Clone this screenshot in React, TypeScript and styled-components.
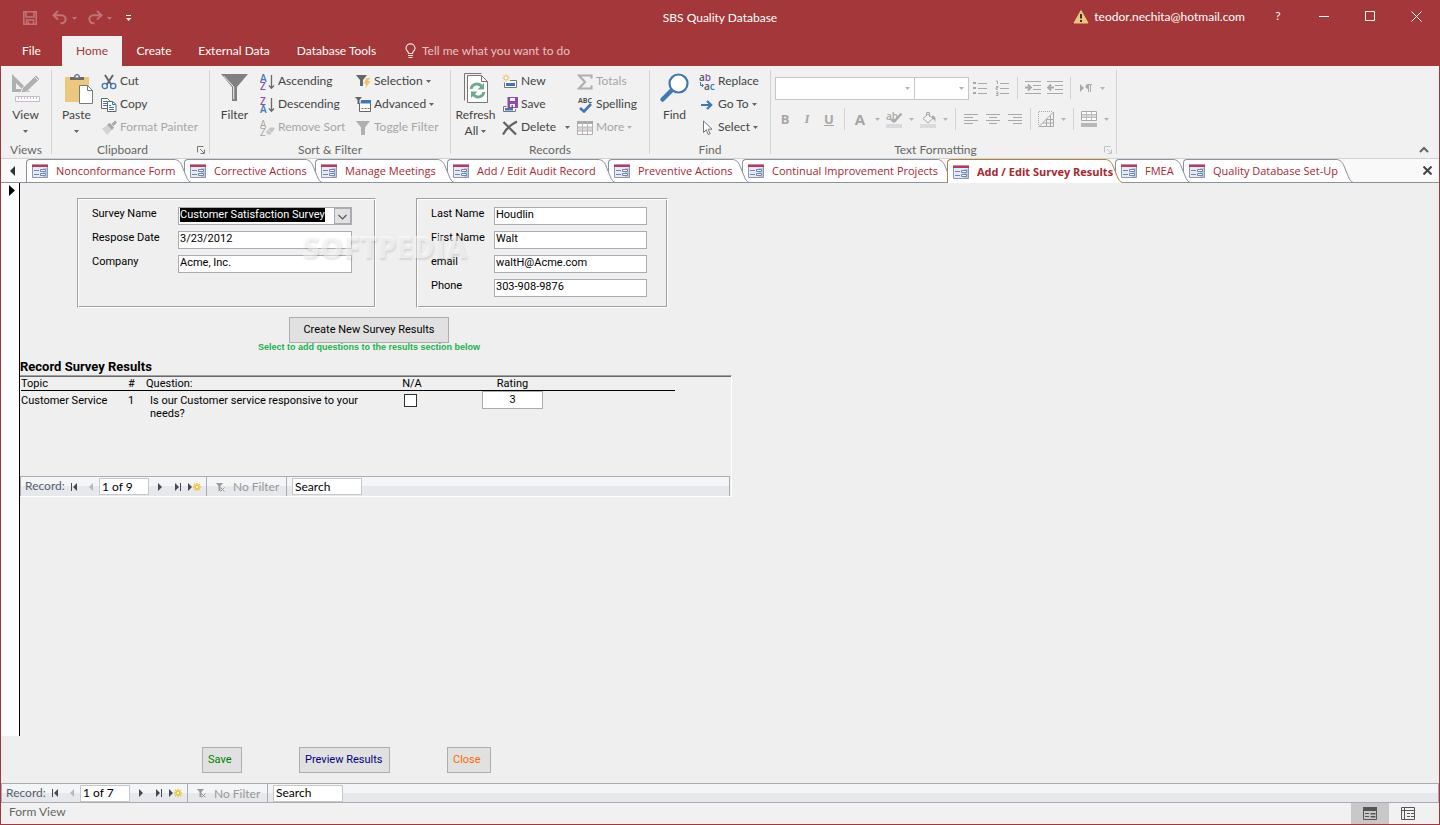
import React from "react";
import styled, { createGlobalStyle, css } from "styled-components";

const RED = "#a4373a";
const UI = `Lato, "Open Sans", sans-serif`;
const TAB = `"Open Sans", "Noto Sans", sans-serif`;
const FORM = `Roboto, "Liberation Sans", sans-serif`;

const GlobalStyle = createGlobalStyle`
  *, *::before, *::after { box-sizing: border-box; }
  body { margin: 0; background: #efefef; }
  button, input, select { font: inherit; color: inherit; margin: 0; padding: 0; border: 0; background: none; border-radius: 0; }
  button { display: inline-flex; align-items: center; text-align: left; white-space: nowrap; }
  svg { display: block; flex: none; }
`;

const Window = styled.div`
  min-height: 100vh;
  display: flex;
  flex-direction: column;
  border: 1px solid ${RED};
  border-top: 0;
  font: 12px/16px ${UI};
  color: #444;
`;

/* ---------- Title bar ---------- */

const TitleBar = styled.header`
  display: grid;
  grid-template-columns: 1fr auto 1fr;
  height: 36px;
  background: ${RED};
  color: #fff;
`;
const QuickAccess = styled.div`
  display: flex;
  align-items: flex-start;
  gap: 7px;
  padding: 10px 0 0 17px;
`;
const QuickSplit = styled.div`
  display: flex;
`;
const QuickButton = styled.button<{ $w: number; $dim?: boolean }>`
  width: ${(p) => p.$w}px;
  height: 16px;
  justify-content: center;
  opacity: ${(p) => (p.$dim ? 0.3 : 1)};
`;
const Title = styled.h1`
  margin: 0;
  padding-top: 10px;
  font: 12px/16px ${UI};
`;
const TitleRight = styled.div`
  display: flex;
  justify-content: flex-end;
  height: 32px;
`;
const Account = styled.a`
  display: flex;
  align-items: center;
  gap: 5px;
  padding: 2px 10px 0 0;
  color: #fff;
  text-decoration: none;
`;
const WindowButton = styled.button`
  width: 46px;
  height: 32px;
  justify-content: center;
`;

/* ---------- Ribbon tabs ---------- */

const Menu = styled.nav`
  display: flex;
  height: 30px;
  background: ${RED};
  color: #fff;
`;
const MenuTab = styled.button<{ $w: number; $active?: boolean }>`
  width: ${(p) => p.$w}px;
  justify-content: center;
  ${(p) => p.$active && css`background: #f1f1f1; color: ${RED};`}
`;
const TellMe = styled.label`
  display: flex;
  align-items: center;
  gap: 6px;
  padding-left: 14px;
  input { width: 200px; }
  input::placeholder { color: #e4c3c4; opacity: 1; }
`;

/* ---------- Ribbon ---------- */

const Ribbon = styled.section`
  display: flex;
  height: 93px;
  background: #f1f1f1;
  border-bottom: 1px solid #d2d2d2;
`;
const Group = styled.div<{ $w: number }>`
  display: flex;
  flex-direction: column;
  width: ${(p) => p.$w}px;
  flex: none;
`;
const GroupBody = styled.div`
  display: flex;
  height: 73px;
  padding-top: 4px;
`;
const GroupFooter = styled.div`
  display: flex;
  margin-top: 3px;
  color: #666;
`;
const GroupLabel = styled.span`
  flex: 1;
  text-align: center;
`;
const Launcher = styled.button<{ $dim?: boolean }>`
  width: 16px;
  justify-content: center;
  color: ${(p) => (p.$dim ? "#c0c0c0" : "#777")};
`;
const GroupLine = styled.div`
  width: 1px;
  margin: 4px 0;
  background: #d2d2d2;
`;
const BigButton = styled.button`
  flex-direction: column;
  width: 49px;
  padding-top: 2px;
  flex: none;
`;
const BigLabel = styled.span<{ $first?: boolean }>`
  display: flex;
  align-items: center;
  justify-content: center;
  gap: 3px;
  height: 16px;
  margin-top: ${(p) => (p.$first ? 3 : 0)}px;
`;
const Column = styled.div<{ $w: number; $pad?: number }>`
  display: flex;
  flex-direction: column;
  width: ${(p) => p.$w}px;
  margin-left: ${(p) => p.$pad || 0}px;
  flex: none;
`;
const SmallButton = styled.button<{ $off?: boolean }>`
  height: 23px;
  gap: 3px;
  color: ${(p) => (p.$off ? "#a6a6a6" : "#444")};
  span { padding-bottom: 2px; }
`;
const SplitRow = styled.div`
  display: flex;
`;
const CaretButton = styled.button`
  width: 14px;
  height: 23px;
  margin-left: 4px;
  justify-content: center;
`;
const FormatArea = styled.div`
  display: flex;
  flex-direction: column;
  gap: 9px;
  padding-top: 7px;
`;
const FormatRow = styled.div<{ $pad: number }>`
  display: flex;
  height: 22px;
  padding-left: ${(p) => p.$pad}px;
  color: #a6a6a6;
`;
const FormatButton = styled.button<{ $w?: number }>`
  width: ${(p) => p.$w || 22}px;
  justify-content: center;
`;
const FormatLine = styled.div`
  width: 1px;
  margin: 0 4px;
  background: #d2d2d2;
`;
const FontBox = styled.div<{ $w: number }>`
  display: flex;
  align-items: center;
  justify-content: flex-end;
  width: ${(p) => p.$w}px;
  height: 23px;
  padding-right: 4px;
  border: 1px solid #c6c6c6;
  background: #fff;
  & + & { margin-left: -1px; }
  select { flex: 1; min-width: 0; appearance: none; height: 100%; }
`;
const Collapse = styled.button`
  margin: auto 10px 5px auto;
`;

/* ---------- Document tabs ---------- */

const TabStrip = styled.nav`
  display: flex;
  height: 24px;
  background: #f9f9f9;
  border-bottom: 1px solid #8a929c;
`;
const ScrollTabs = styled.button`
  width: 25px;
  padding-left: 9px;
  flex: none;
`;
const DocTab = styled.button<{ $w: number; $z: number; $active?: boolean }>`
  position: relative;
  z-index: ${(p) => p.$z};
  flex: none;
  align-items: stretch;
  width: ${(p) => p.$w}px;
  height: ${(p) => (p.$active ? 24 : 23)}px;
  margin-right: -8px;
  color: #a9272f;
  font: ${(p) => (p.$active ? 700 : 400)} 11px/16px ${TAB};
`;
const DocTabBody = styled.span<{ $active?: boolean }>`
  display: flex;
  align-items: center;
  gap: 8px;
  flex: 1;
  min-width: 0;
  padding-left: 5px;
  background: #fff;
  border: solid ${(p) => (p.$active ? "#a8843f" : "#8a929c")};
  border-width: 1px 0 0 1px;
  border-top-left-radius: 4px;
  span { position: relative; z-index: 1; }
`;
const CloseDoc = styled.button`
  margin-left: auto;
  width: 24px;
  justify-content: center;
`;

/* ---------- Form ---------- */

const FormMain = styled.main`
  flex: 1;
  display: flex;
  background: #efefef;
  font: 11px/14px ${FORM};
  color: #000;
`;
const Selector = styled.div`
  width: 19px;
  flex: none;
  padding: 2px 0 0 8px;
  background: #fff;
  border-right: 1px solid #000;
`;
const Detail = styled.div`
  position: relative;
  flex: 1;
  min-width: 0;
`;
const Frames = styled.div`
  display: flex;
  align-items: flex-start;
  gap: 40px;
  padding: 15px 0 0 57px;
`;
const Frame = styled.fieldset<{ $w: number }>`
  display: flex;
  flex-direction: column;
  gap: 6px;
  width: ${(p) => p.$w}px;
  height: 110px;
  margin: 0;
  padding: 8px 0 0 14px;
  border: 1px solid;
  border-color: #a0a0a0 #fff #fff #a0a0a0;
  box-shadow: inset 1px 1px 0 #fff, inset -1px -1px 0 #a0a0a0;
`;
const Field = styled.label<{ $label: number; $input: number }>`
  display: grid;
  grid-template-columns: ${(p) => p.$label}px ${(p) => p.$input}px;
  height: 18px;
  input { border: 1px solid #ababb3; background: #fff; padding: 0 1px 2px; }
`;
const Combo = styled.span`
  display: flex;
  border: 1px solid #ababb3;
  background: #fff;
  position: relative;
  select {
    flex: 1;
    min-width: 0;
    appearance: none;
    padding: 0 18px 2px 1px;
    color: #fff;
    background: linear-gradient(#000, #000) 1px 0 / 145px 14px no-repeat #fff;
  }
  svg {
    position: absolute;
    right: 0;
    top: 0;
    pointer-events: none;
  }
`;
const Watermark = styled.div`
  position: absolute;
  left: 282px;
  top: 46px;
  font: 800 30px/36px "Open Sans", sans-serif;
  color: rgba(255, 255, 255, 0.5);
  text-shadow: 1px 2px 2px rgba(0, 0, 0, 0.1);
  pointer-events: none;
`;
const FormButton = styled.button<{ $w: number; $color?: string; $center?: boolean }>`
  width: ${(p) => p.$w}px;
  height: 26px;
  padding: 0 5px;
  justify-content: ${(p) => (p.$center ? "center" : "flex-start")};
  border: 1px solid #adadad;
  background: #e1e1e1;
  color: ${(p) => p.$color || "#000"};
`;
const Create = styled.div`
  display: flex;
  flex-direction: column;
  align-items: center;
  width: 216px;
  margin: 9px 0 0 241px;
`;
const Hint = styled.span`
  font: 700 9px/9px "Liberation Sans", sans-serif;
  color: #22b14c;
  white-space: nowrap;
`;
const SectionTitle = styled.h2`
  margin: 7px 0 0;
  font: 700 13px/16px ${FORM};
`;
const SubForm = styled.section`
  display: flex;
  flex-direction: column;
  justify-content: space-between;
  width: 712px;
  height: 122px;
  border: solid #fff;
  border-width: 1px 1px 1px 0;
  border-top-color: #a0a0a0;
  box-shadow: inset 0 1px 0 #696969;
  padding: 1px 1px 0 0;
`;
const Results = styled.table`
  width: 654px;
  margin-left: 1px;
  table-layout: fixed;
  border-collapse: collapse;
  th { height: 13px; padding: 0; font-weight: 400; line-height: 13px; text-align: left; border-bottom: 1px solid #000; }
  td { padding: 0; vertical-align: top; }
  td > span { display: block; padding: 3px 0 0; line-height: 13px; }
  td:nth-child(3) > span { padding-left: 4px; }
`;
const CenterHead = styled.th`
  && { text-align: center; }
`;
const Centered = styled.td`
  text-align: center;
  input[type="checkbox"] {
    appearance: none;
    display: block;
    width: 13px;
    height: 13px;
    margin: 3px 0 0 14px;
    border: 1px solid #333;
    background: #fff;
  }
  input[type="text"] {
    display: block;
    width: 61px;
    height: 18px;
    margin: 0 auto;
    padding-bottom: 2px;
    text-align: center;
    border: 1px solid #ababb3;
    background: #fff;
  }
`;
const FormFooter = styled.footer`
  display: flex;
  align-items: flex-start;
  gap: 57px;
  height: 47px;
  padding: 11px 0 0 201px;
  background: #efefef;
  font: 11px/14px ${FORM};
`;

/* ---------- Record navigator and status bar ---------- */

const NavBar = styled.div<{ $foot?: boolean }>`
  display: flex;
  align-items: stretch;
  height: 20px;
  padding-left: 4px;
  border: solid #ababb3;
  border-width: ${(p) => (p.$foot ? "1px" : "1px 1px 0")};
  background: linear-gradient(#f4f5f7 50%, #e6e8eb 50%);
  font: 12px/16px ${UI};
  color: #555d6b;
  input {
    align-self: center;
    height: 17px;
    padding: 0 2px 1px;
    border: 1px solid #c6c8cc;
    background: #fff;
    color: #000;
  }
`;
const NavLabel = styled.label`
  width: 42px;
  line-height: 18px;
`;
const PageInput = styled.input`
  width: 50px;
`;
const SearchInput = styled.input`
  width: 70px;
  margin-left: 5px;
`;
const NavButton = styled.button<{ $w: number }>`
  width: ${(p) => p.$w}px;
  justify-content: center;
`;
const NavLine = styled.div`
  width: 1px;
  margin-left: 1px;
  background: #ababb3;
`;
const NoFilter = styled.button`
  width: 78px;
  gap: 8px;
  padding: 1px 0 0 9px;
  color: #999;
`;
const StatusBar = styled.footer`
  display: flex;
  height: 21px;
  padding-left: 8px;
  background: #f1f1f1;
  color: #666;
  line-height: 18px;
`;
const ViewButton = styled.button<{ $on?: boolean }>`
  width: 38px;
  justify-content: center;
  background: ${(p) => (p.$on ? "#c8c8c8" : "transparent")};
  &:last-child { margin-right: 12px; }
`;
const Spacer = styled.span`
  flex: 1;
`;

/* ---------- Icons ---------- */

const Svg = ({ w = 16, h = 16, children }: { w?: number; h?: number; children: React.ReactNode }) => (
  <svg width={w} height={h} viewBox={`0 0 ${w} ${h}`} fill="none" aria-hidden="true">{children}</svg>
);
const Caret = ({ c = "#666" }: { c?: string }) => (
  <Svg w={5} h={3}><path d="M0 0h5L2.5 3z" fill={c} /></Svg>
);
const GREY = "#a9a9a9";

const SaveQuick = () => (
  <Svg><path d="M1.8 1.8h12.4v12.4H1.8zM4 2v5h8V2M4.5 14v-4h7v4M6.5 11.5V14" stroke="#fff" strokeWidth="1.6" /></Svg>
);
const UndoIcon = () => (
  <Svg><path d="M6 1 1.5 5.3 6 9.6M2 5.3h7.5c5.5 0 5.5 8 0 8H8.5" stroke="#fff" strokeWidth="2" /></Svg>
);
const RedoIcon = () => (
  <Svg><path d="m10 1 4.5 4.3L10 9.6M14 5.3H6.5c-5.5 0-5.5 8 0 8h1" stroke="#fff" strokeWidth="2" /></Svg>
);
const CustomizeIcon = () => (
  <Svg w={7} h={8}><path d="M1 1.5h5" stroke="#fff" /><path d="M1 4h5.5L3.5 7z" fill="#fff" /></Svg>
);
const WarningIcon = () => (
  <Svg><path d="M8 1.5 15 14H1z" fill="#edc67b" stroke="#edc67b" strokeLinejoin="round" /><path d="M8 5v4.5M8 11v2" stroke="#333" strokeWidth="2" /></Svg>
);
const BulbIcon = () => (
  <Svg w={11} h={16}><path d="M3.5 10.5C3.5 8 1 8 1 5.3a4.5 4.5 0 0 1 9 0C10 8 7.5 8 7.5 10.5zM3 12.5h5M3.5 14.5h4" stroke="#f3dfe0" strokeWidth="1.2" /></Svg>
);
const ViewIcon = () => (
  <Svg w={32} h={32}>
    <path d="M2 2v18h18zm4 9 6 6H6z" fill="#b0b0b0" fillRule="evenodd" />
    <path d="m11 21 1.5-5L26 3l4 4-13.5 13z" fill="#b0b0b0" stroke="#f1f1f1" />
    <path d="m24 4 4.5 4.5" stroke="#f1f1f1" />
    <path d="M5.5 24.5h24v5h-24z" fill="#fbf8fc" stroke="#c4bcc6" />
    <path d="M8.5 25v2M11.5 25v2M14.5 25v2M17.5 25v2M20.5 25v2M23.5 25v2M26.5 25v2" stroke="#c4bcc6" />
  </Svg>
);
const PasteIcon = () => (
  <Svg w={32} h={32}>
    <path d="M4 5h24v25H4z" fill="#edc77e" />
    <path d="M9 8V5h4c0-4 6-4 6 0h4v3z" fill="#6b6b6b" /><path d="M14.5 4.5h3" stroke="#f1f1f1" strokeWidth="2" />
    <path d="M18.5 13.5h8l5 5v13h-13z" fill="#fff" stroke="#7a7a7a" /><path d="M26.5 13.5v5h5" stroke="#7a7a7a" />
  </Svg>
);
const CutIcon = () => (
  <Svg>
    <path d="m4 1 6.5 10M12 1 5.5 11" stroke="#666" strokeWidth="2" />
    <circle cx="3.8" cy="12" r="2.6" stroke="#3e79b6" strokeWidth="1.4" /><circle cx="12.2" cy="12" r="2.6" stroke="#3e79b6" strokeWidth="1.4" />
  </Svg>
);
const CopyIcon = () => (
  <Svg>
    <path d="M.5 1.5h6l2 2v8h-8z" fill="#fff" stroke="#666" /><path d="M2 4.5h4M2 6.5h4M2 8.5h4" stroke="#3e79b6" />
    <path d="M6.5 4.5h5l3.5 3v7H6.5z" fill="#fff" stroke="#666" /><path d="M11.5 4.5v3h3M8 8.5h2M8 10.5h5M8 12.5h5" stroke="#3e79b6" />
  </Svg>
);
const PainterIcon = () => (
  <Svg>
    <path d="M1 8.5 7 5l4 4.5L6 15z" fill="#d6d0d7" />
    <path d="m6 4.5 3-1.5 4 4.5-2 2.5zM10.5 4 14 .5l2 2L12.5 6z" fill="#a9a9a9" />
  </Svg>
);
const LauncherIcon = () => (
  <Svg w={8} h={8}><path d="M.5 6.5v-6h6M3 3l4 4M7.5 3.5v4h-4" stroke="currentColor" /></Svg>
);
const FilterIcon = () => (
  <Svg w={32} h={32}>
    <path d="M2 2h27L18 15v14h-5V15z" fill="#808080" /><path d="m4.5 3.8 10.2 11v12.5" stroke="#f1f1f1" />
  </Svg>
);
const SortIcon = ({ desc }: { desc?: boolean }) => (
  <Svg>
    <text x="1" y="7.5" fontFamily="Open Sans" fontWeight="600" fontSize="10" fill={desc ? "#8a4fa8" : "#3e79b6"}>{desc ? "Z" : "A"}</text>
    <text x="1" y="15.5" fontFamily="Open Sans" fontWeight="600" fontSize="10" fill={desc ? "#3e79b6" : "#8a4fa8"}>{desc ? "A" : "Z"}</text>
    <path d="M12.5 1v13M10 11.5l2.5 2.7 2.5-2.7" stroke="#6a6a6a" strokeWidth="1.3" />
  </Svg>
);
const RemoveSortIcon = () => (
  <Svg>
    <text x="1" y="7.5" fontFamily="Open Sans" fontSize="10" fill="#a6a6a6">A</text>
    <text x="1" y="15.5" fontFamily="Open Sans" fontSize="10" fill="#a6a6a6">Z</text>
    <path d="m7 12 4-4.5h4l1 1-4.5 6H8.500z" fill="#c9c3ca" /><path d="m9 9.5 3.5 3.5" stroke="#f1f1f1" />
  </Svg>
);
const SelectionIcon = () => (
  <Svg><path d="M1 1h11L8 6v6H5V6z" fill="#666" /><path d="m11 4 4.5-.5-2 3.5H16l-6.500 8.500 1.500-5.500H8.500z" fill="#edc067" stroke="#f1f1f1" strokeWidth=".5" /></Svg>
);
const AdvancedIcon = () => (
  <Svg>
    <path d="M0 0h7L4.500 3v4h-2V3z" fill="#666" />
    <path d="M4.500 6v8.500h11v-10H7" fill="#fff" stroke="#666" /><path d="M6 3h10v3.500H5.500z" fill="#3e79b6" />
    <path d="M6.500 11.500h2M9.500 11.500h2M12.500 11.500h2" stroke="#666" />
  </Svg>
);
const ToggleIcon = () => <Svg><path d="M1 1h14l-5 6.500V15H6V7.500z" fill="#b0b0b0" /></Svg>;
const RefreshIcon = () => (
  <Svg w={32} h={32}>
    <path d="M21.500 1.500h-17v27" stroke="#777" />
    <path d="M7.500 3.500h14l6 6v21h-20z" fill="#fff" stroke="#777" /><path d="M21.500 3.500v6h6" stroke="#777" />
    <path d="M11 17c1-5.500 8-6.500 10.500-2.500M24 20c-1 5.500-8 6.500-10.500 2.500" stroke="#6fa98f" strokeWidth="2.800" />
    <path d="M24 11v6.500h-6.500zM11 26v-6.500h6.500z" fill="#6fa98f" />
  </Svg>
);
const NewIcon = () => (
  <Svg>
    <path d="M2.500 8.500v5h12v-7H8" stroke="#777" fill="#fff" /><path d="M4 9h9v3H4z" fill="#3e79b6" />
    <path d="M4 0v7.500M.5 3.800h7M1.500 1.300l5 5M6.500 1.300l-5 5" stroke="#e8b65c" /><circle cx="4" cy="3.800" r="1.200" fill="#fff" />
  </Svg>
);
const SaveIcon = () => (
  <Svg>
    <path d="M4.500 9.500h-3v5h12V12" stroke="#777" fill="#fff" /><path d="M3 11h8v2.500H3z" fill="#3e79b6" />
    <path d="M5.500 0H16v11H5.500z" fill="#8a4fa8" /><path d="M8 1h5v3H8zM8 7h5v3h-2V8H9.500v2H8z" fill="#f1f1f1" />
  </Svg>
);
const DeleteIcon = () => (
  <Svg><path d="m1.500 2 12.500 12.500M15 1.500C10 4 4 9 1 14.500" stroke="#606060" strokeWidth="2.200" /></Svg>
);
const SigmaIcon = () => (
  <Svg><path d="M14.500 4.500v-3H2L8 8l-6 6.500h12.500v-3" stroke="#b0b0b0" strokeWidth="2.200" /></Svg>
);
const SpellIcon = () => (
  <Svg>
    <text x="1" y="6" fontFamily="Open Sans" fontWeight="700" fontSize="7" fill="#555">ABC</text>
    <path d="m3 11 4 3.500L14 7" stroke="#3e79b6" strokeWidth="2.600" />
  </Svg>
);
const MoreIcon = () => (
  <Svg>
    <path d="M.500 1.500h15v13H.500z" fill="#fff" stroke="#b0b0b0" /><path d="M0 1h16v3H0z" fill="#a9a9a9" />
    <path d="M1 7h14v4H1z" fill="#ddd6de" /><path d="M5.500 1v13M10.500 1v13M1 7h14M1 11h14" stroke="#b8b8b8" />
  </Svg>
);
const FindIcon = () => (
  <Svg w={32} h={32}>
    <path d="M3.500 27.500 13 18" stroke="#3e79b6" strokeWidth="4.500" strokeLinecap="round" />
    <circle cx="19.500" cy="11.500" r="9" fill="#fff" stroke="#3e79b6" strokeWidth="2.200" />
  </Svg>
);
const ReplaceIcon = () => (
  <Svg>
    <text x="0" y="6.500" fontFamily="Open Sans" fontWeight="600" fontSize="10" fill="#555">a<tspan fill="#8a4fa8">b</tspan></text>
    <text x="5" y="15.500" fontFamily="Open Sans" fontWeight="600" fontSize="10" fill="#555">a<tspan fill="#3e79b6">c</tspan></text>
    <path d="M1.500 8v3.500H4M2.800 9.800l1.700 1.700-1.700 1.700" stroke="#3e79b6" />
  </Svg>
);
const GoToIcon = () => (
  <Svg><path d="M2 8h10M8 4l4.200 4L8 12" stroke="#3e79b6" strokeWidth="2.200" /></Svg>
);
const SelectIcon = () => (
  <Svg><path d="M4.500 1v11.500l2.800-2.700 1.900 4.700 2-.8-2-4.500h3.800z" fill="#fff" stroke="#777" /></Svg>
);
const BulletsIcon = ({ numbered }: { numbered?: boolean }) => (
  <Svg>
    {numbered ? (
      <path d="M2 1h1.500v3M2 6.500h2v1.300H2v1.500h2M2 12h2v3.500H2M2 13.700h2" stroke={GREY} />
    ) : (
      <path d="M1 2h3v2H1zM1 7h3v2H1zM1 12h3v2H1z" fill={GREY} />
    )}
    <path d="M6 3.500h9M6 8.500h9M6 13.500h9" stroke={GREY} />
  </Svg>
);
const IndentIcon = ({ out }: { out?: boolean }) => (
  <Svg>
    <path d="M0 1.500h16M8 5.500h8M8 9.500h8M0 13.500h16" stroke={GREY} />
    <path d={out ? "M7 7.500H1M4 4.500l-3 3 3 3" : "M0 7.500h6M3 4.500l3 3-3 3"} stroke={GREY} strokeWidth="1.800" />
  </Svg>
);
const PilcrowIcon = () => (
  <Svg w={14} h={10}><path d="M1 1v8l4-4z" fill={GREY} /><path d="M13 1.500H9.500M9.500 1v8M11.500 1v8" stroke={GREY} /><path d="M9.500 1v5C5.500 6 5.500 1 9.500 1z" fill={GREY} /></Svg>
);
const Glyph = styled.span<{ $kind: "b" | "i" | "u" | "a" }>`
  font-weight: 700;
  font-size: ${(p) => (p.$kind === "a" ? 15 : 13)}px;
  font-style: ${(p) => (p.$kind === "i" ? "italic" : "normal")};
  font-family: ${(p) => (p.$kind === "i" ? '"Liberation Serif", serif' : TAB)};
  text-decoration: ${(p) => (p.$kind === "u" ? "underline" : "none")};
`;
const HighlightIcon = () => (
  <Svg w={17} h={17}>
    <text x="0" y="9" fontFamily="Open Sans" fontWeight="600" fontSize="10" fill={GREY}>ab</text>
    <path d="M15.500 2.500 8 11M5 8l3 3" stroke={GREY} strokeWidth="2.200" /><path d="M0 13h16v4H0z" fill="#ddd8de" />
  </Svg>
);
const FillIcon = () => (
  <Svg w={17} h={17}>
    <path d="M3 7.500 8 3l5 4.500-5 4.500zM6.500 5V1.500h3V6" stroke={GREY} /><path d="M12 4.500c4 0 4 4 3 7-.5-3-1-3-3-4z" fill={GREY} /><path d="M0 13h16v4H0z" fill="#ddd8de" />
  </Svg>
);
const AlignIcon = ({ d }: { d: string }) => <Svg w={14} h={12}><path d={d} stroke={GREY} /></Svg>;
const GridlinesIcon = () => (
  <Svg><path d="M.500 14V.500H15" stroke={GREY} strokeDasharray="1 1" /><path d="M15.500 1v14.500H1zM8.500 8.500V15M12.500 4.500V15M8 8.500h7M5 12h10" stroke={GREY} /></Svg>
);
const AltRowIcon = () => (
  <Svg><path d="M.500 .500h15v9H.500z" fill="#fff" stroke={GREY} /><path d="M1 4h14v3H1z" fill="#ddd6de" /><path d="M5.500 1v8M10.500 1v8M1 3.500h14M1 6.500h14" stroke="#c0bcc0" /><path d="M0 12h16v4H0z" fill="#b8b8b8" /></Svg>
);
const FormIcon = () => (
  <Svg>
    <path d="M.500 3.500h15v11H.500z" fill="#e4ebf7" stroke="#8d97ad" /><path d="M11 5h4v9h-4z" fill="#b9cae6" />
    <path d="M0 1h16v3H0z" fill="#b43a5e" /><path d="M0 1h16v1H0z" fill="#d58a9f" />
    <path d="M2 7.500h5M2 11.500h5" stroke="#6f86b3" />
    <path d="M8.500 6.500h5v2h-5zM8.500 10.500h5v2h-5z" fill="#f4f7fc" stroke="#6f86b3" />
  </Svg>
);
const Slope = ({ active }: { active?: boolean }) => (
  <Svg w={18} h={active ? 24 : 23}>
    <path d="M0 .500C4 .500 6.500 3 8 7l4.500 11c1.200 3 2.500 5 5 5.500V24H0z" fill="#fff" />
    <path d="M0 .500C4 .500 6.500 3 8 7l4.500 11c1.200 3 2.500 5 5 5.500" stroke={active ? "#a8843f" : "#8a929c"} />
  </Svg>
);
const XIcon = ({ s, c, sw = 1 }: { s: number; c: string; sw?: number }) => (
  <Svg w={s} h={s}><path d={`M.500 .500 ${s - 0.5} ${s - 0.5}M${s - 0.5} .500 .500 ${s - 0.5}`} stroke={c} strokeWidth={sw} /></Svg>
);
const Arrow = ({ kind, off }: { kind: "first" | "prev" | "next" | "last"; off?: boolean }) => {
  const c = off ? "#b5b8bd" : "#444a55";
  const back = kind === "first" || kind === "prev";
  return (
    <Svg w={7} h={8}>
      <path d={back ? "M6 0v8L2 4z" : "M1 0v8l4-4z"} fill={c} />
      {kind === "first" && <path d="M.500 0v8" stroke={c} />}
      {kind === "last" && <path d="M6.500 0v8" stroke={c} />}
    </Svg>
  );
};
const NewRecordIcon = () => (
  <Svg w={13} h={8}>
    <path d="M0 0v8l4-4z" fill="#444a55" />
    <path d="M9 0v8M5 4h8M6 1l6 6M12 1 6 7" stroke="#e9c53c" strokeWidth="1.400" /><path d="M8 3h2v2H8z" fill="#fff6c8" />
  </Svg>
);
const NoFilterIcon = () => (
  <Svg w={9} h={9}><path d="M0 0h7L4.500 3v5h-2V3z" fill="#999" /><path d="m4.500 4.500 4 4M8.500 4.500l-4 4" stroke="#999" /></Svg>
);

/* ---------- Parts ---------- */

const Small = ({ icon, text, off, menu }: { icon: React.ReactNode; text: string; off?: boolean; menu?: boolean }) => (
  <SmallButton $off={off} disabled={off}>
    {icon}
    <span>{text}</span>
    {menu && <Caret c={off ? "#b5b5b5" : "#666"} />}
  </SmallButton>
);

const RibbonGroup = ({ w, label, launcher, children }: { w: number; label: string; launcher?: "on" | "off"; children: React.ReactNode }) => (
  <>
    <Group $w={w}>
      <GroupBody>{children}</GroupBody>
      <GroupFooter>
        <GroupLabel>{label}</GroupLabel>
        {launcher && <Launcher $dim={launcher === "off"} aria-label={`${label} settings`}><LauncherIcon /></Launcher>}
      </GroupFooter>
    </Group>
    <GroupLine />
  </>
);

const RecordNav = ({ id, page, foot }: { id: string; page: string; foot?: boolean }) => (
  <NavBar $foot={foot}>
    <NavLabel htmlFor={id}>Record:</NavLabel>
    <NavButton $w={14} aria-label="First record"><Arrow kind="first" /></NavButton>
    <NavButton $w={18} aria-label="Previous record" disabled><Arrow kind="prev" off /></NavButton>
    <PageInput id={id} defaultValue={page} />
    <NavButton $w={22} aria-label="Next record"><Arrow kind="next" /></NavButton>
    <NavButton $w={12} aria-label="Last record"><Arrow kind="last" /></NavButton>
    <NavButton $w={22} aria-label="New record"><NewRecordIcon /></NavButton>
    <NavLine />
    <NoFilter disabled><NoFilterIcon />No Filter</NoFilter>
    <NavLine />
    <SearchInput aria-label="Search" defaultValue="Search" />
  </NavBar>
);

const docTabs = [
  { name: "Nonconformance Form", w: 166 },
  { name: "Corrective Actions", w: 139 },
  { name: "Manage Meetings", w: 140 },
  { name: "Add / Edit Audit Record", w: 169 },
  { name: "Preventive Actions", w: 142 },
  { name: "Continual Improvement Projects", w: 213 },
  { name: "Add / Edit Survey Results", w: 176, active: true },
  { name: "FMEA", w: 76 },
  { name: "Quality Database Set-Up", w: 171 },
];

export default function App() {
  return (
    <Window>
      <GlobalStyle />
      <TitleBar>
        <QuickAccess>
          <QuickButton $w={24} $dim aria-label="Save"><SaveQuick /></QuickButton>
          <QuickSplit>
            <QuickButton $w={22} $dim aria-label="Undo"><UndoIcon /></QuickButton>
            <QuickButton $w={6} $dim aria-label="Undo list"><Caret c="#fff" /></QuickButton>
          </QuickSplit>
          <QuickSplit>
            <QuickButton $w={22} $dim aria-label="Redo"><RedoIcon /></QuickButton>
            <QuickButton $w={6} $dim aria-label="Redo list"><Caret c="#fff" /></QuickButton>
          </QuickSplit>
          <QuickButton $w={18} aria-label="Customize"><CustomizeIcon /></QuickButton>
        </QuickAccess>
        <Title>SBS Quality Database</Title>
        <TitleRight>
          <Account href="#account"><WarningIcon />teodor.nechita@hotmail.com</Account>
          <WindowButton>?</WindowButton>
          <WindowButton aria-label="Minimize"><Svg w={10} h={1}><path d="M0 .500h10" stroke="#fff" /></Svg></WindowButton>
          <WindowButton aria-label="Maximize"><Svg w={10} h={10}><path d="M.500 .500h9v9h-9z" stroke="#fff" /></Svg></WindowButton>
          <WindowButton aria-label="Close"><XIcon s={11} c="#fff" /></WindowButton>
        </TitleRight>
      </TitleBar>

      <Menu>
        <MenuTab $w={61}>File</MenuTab>
        <MenuTab $w={60} $active>Home</MenuTab>
        <MenuTab $w={64}>Create</MenuTab>
        <MenuTab $w={96}>External Data</MenuTab>
        <MenuTab $w={109}>Database Tools</MenuTab>
        <TellMe><BulbIcon /><input aria-label="Tell me" placeholder="Tell me what you want to do" /></TellMe>
      </Menu>

      <Ribbon>
        <RibbonGroup w={50} label="Views">
          <BigButton>
            <ViewIcon />
            <BigLabel $first>View</BigLabel>
            <BigLabel><Caret /></BigLabel>
          </BigButton>
        </RibbonGroup>
        <RibbonGroup w={157} label="Clipboard" launcher="on">
          <BigButton>
            <PasteIcon />
            <BigLabel $first>Paste</BigLabel>
            <BigLabel><Caret /></BigLabel>
          </BigButton>
          <Column $w={100}>
            <Small icon={<CutIcon />} text="Cut" />
            <Small icon={<CopyIcon />} text="Copy" />
            <Small icon={<PainterIcon />} text="Format Painter" off />
          </Column>
        </RibbonGroup>
        <RibbonGroup w={240} label="Sort &amp; Filter">
          <BigButton>
            <FilterIcon />
            <BigLabel $first>Filter</BigLabel>
          </BigButton>
          <Column $w={96}>
            <Small icon={<SortIcon />} text="Ascending" />
            <Small icon={<SortIcon desc />} text="Descending" />
            <Small icon={<RemoveSortIcon />} text="Remove Sort" off />
          </Column>
          <Column $w={90}>
            <Small icon={<SelectionIcon />} text="Selection" menu />
            <Small icon={<AdvancedIcon />} text="Advanced" menu />
            <Small icon={<ToggleIcon />} text="Toggle Filter" off />
          </Column>
        </RibbonGroup>
        <RibbonGroup w={198} label="Records">
          <BigButton>
            <RefreshIcon />
            <BigLabel $first>Refresh</BigLabel>
            <BigLabel>All <Caret /></BigLabel>
          </BigButton>
          <Column $w={75} $pad={2}>
            <Small icon={<NewIcon />} text="New" />
            <Small icon={<SaveIcon />} text="Save" />
            <SplitRow>
              <Small icon={<DeleteIcon />} text="Delete" />
              <CaretButton aria-label="Delete options"><Caret /></CaretButton>
            </SplitRow>
          </Column>
          <Column $w={70}>
            <Small icon={<SigmaIcon />} text="Totals" off />
            <Small icon={<SpellIcon />} text="Spelling" />
            <Small icon={<MoreIcon />} text="More" off menu />
          </Column>
        </RibbonGroup>
        <RibbonGroup w={120} label="Find">
          <BigButton>
            <FindIcon />
            <BigLabel $first>Find</BigLabel>
          </BigButton>
          <Column $w={70}>
            <Small icon={<ReplaceIcon />} text="Replace" />
            <Small icon={<GoToIcon />} text="Go To" menu />
            <Small icon={<SelectIcon />} text="Select" menu />
          </Column>
        </RibbonGroup>
        <RibbonGroup w={345} label="Text Formatting" launcher="off">
          <FormatArea>
            <FormatRow $pad={4}>
              <FontBox $w={140}><select aria-label="Font" disabled /><Caret c="#b5b5b5" /></FontBox>
              <FontBox $w={55}><select aria-label="Font size" disabled /><Caret c="#b5b5b5" /></FontBox>
              <FormatButton aria-label="Bullets"><BulletsIcon /></FormatButton>
              <FormatButton aria-label="Numbering"><BulletsIcon numbered /></FormatButton>
              <FormatLine />
              <FormatButton aria-label="Increase indent"><IndentIcon /></FormatButton>
              <FormatButton aria-label="Decrease indent"><IndentIcon out /></FormatButton>
              <FormatLine />
              <FormatButton aria-label="Text direction"><PilcrowIcon /></FormatButton>
              <FormatButton $w={10} aria-label="Direction options"><Caret c="#b5b5b5" /></FormatButton>
            </FormatRow>
            <FormatRow $pad={3}>
              <FormatButton><Glyph $kind="b">B</Glyph></FormatButton>
              <FormatButton><Glyph $kind="i">I</Glyph></FormatButton>
              <FormatButton><Glyph $kind="u">U</Glyph></FormatButton>
              <FormatLine />
              <FormatButton><Glyph $kind="a">A</Glyph></FormatButton>
              <FormatButton $w={12} aria-label="Font colors"><Caret c="#b5b5b5" /></FormatButton>
              <FormatButton aria-label="Highlight"><HighlightIcon /></FormatButton>
              <FormatButton $w={12} aria-label="Highlight colors"><Caret c="#b5b5b5" /></FormatButton>
              <FormatButton aria-label="Background"><FillIcon /></FormatButton>
              <FormatButton $w={12} aria-label="Background colors"><Caret c="#b5b5b5" /></FormatButton>
              <FormatLine />
              <FormatButton aria-label="Align left"><AlignIcon d="M0 1.500h14M0 4.500h9M0 7.500h14M0 10.500h9" /></FormatButton>
              <FormatButton aria-label="Center"><AlignIcon d="M0 1.500h14M3 4.500h8M0 7.500h14M3 10.500h8" /></FormatButton>
              <FormatButton aria-label="Align right"><AlignIcon d="M0 1.500h14M5 4.500h9M0 7.500h14M5 10.500h9" /></FormatButton>
              <FormatLine />
              <FormatButton aria-label="Gridlines"><GridlinesIcon /></FormatButton>
              <FormatButton $w={12} aria-label="Gridline options"><Caret c="#b5b5b5" /></FormatButton>
              <FormatLine />
              <FormatButton aria-label="Alternate row color"><AltRowIcon /></FormatButton>
              <FormatButton $w={12} aria-label="Row colors"><Caret c="#b5b5b5" /></FormatButton>
            </FormatRow>
          </FormatArea>
        </RibbonGroup>
        <Collapse aria-label="Collapse ribbon"><Svg w={10} h={7}><path d="m1 6 4-4 4 4" stroke="#666" strokeWidth="2" /></Svg></Collapse>
      </Ribbon>

      <TabStrip>
        <ScrollTabs aria-label="Scroll tabs left"><Svg w={5} h={10}><path d="M5 0v10L0 5z" fill="#333" /></Svg></ScrollTabs>
        {docTabs.map((t, i) => (
          <DocTab key={t.name} $w={t.w} $z={t.active ? 20 : 10 - i} $active={t.active}>
            <DocTabBody $active={t.active}><FormIcon /><span>{t.name}</span></DocTabBody>
            <Slope active={t.active} />
          </DocTab>
        ))}
        <CloseDoc aria-label="Close tab"><XIcon s={9} c="#444" sw={2} /></CloseDoc>
      </TabStrip>

      <FormMain>
        <Selector><Svg w={6} h={11}><path d="M0 0v11l6-5.500z" fill="#000" /></Svg></Selector>
        <Detail>
          <Frames>
            <Frame $w={299}>
              <Field $label={86} $input={174}>
                Survey Name
                <Combo>
                  <select><option>Customer Satisfaction Survey</option></select>
                  <Svg w={17} h={16}><path d="M.500 0v16M0 .500h17M16.500 0v16M0 15.500h17" stroke="#ababb3" /><path d="M1 1h15v14H1z" fill="#e1e1e1" /><path d="m4.500 7 4 4 4-4" stroke="#555" strokeWidth="1.200" /></Svg>
                </Combo>
              </Field>
              <Field $label={86} $input={174}>Respose Date<input defaultValue="3/23/2012" /></Field>
              <Field $label={86} $input={174}>Company<input defaultValue="Acme, Inc." /></Field>
            </Frame>
            <Frame $w={252}>
              <Field $label={63} $input={153}>Last Name<input defaultValue="Houdlin" /></Field>
              <Field $label={63} $input={153}>First Name<input defaultValue="Walt" /></Field>
              <Field $label={63} $input={153}>email<input defaultValue="waltH@Acme.com" /></Field>
              <Field $label={63} $input={153}>Phone<input defaultValue="303-908-9876" /></Field>
            </Frame>
          </Frames>
          <Create>
            <FormButton $w={160} $center>Create New Survey Results</FormButton>
            <Hint>Select to add questions to the results section below</Hint>
          </Create>
          <SectionTitle>Record Survey Results</SectionTitle>
          <SubForm>
            <Results>
              <colgroup>
                <col width="107" /><col width="18" /><col width="244" /><col width="44" /><col width="157" /><col />
              </colgroup>
              <thead>
                <tr>
                  <th>Topic</th><th>#</th><th>Question:</th>
                  <CenterHead>N/A</CenterHead>
                  <CenterHead>Rating</CenterHead>
                  <th />
                </tr>
              </thead>
              <tbody>
                <tr>
                  <td><span>Customer Service</span></td>
                  <td><span>1</span></td>
                  <td><span>Is our Customer service responsive to your needs?</span></td>
                  <Centered><input type="checkbox" aria-label="Not applicable" /></Centered>
                  <Centered><input type="text" aria-label="Rating" defaultValue="3" /></Centered>
                  <td />
                </tr>
              </tbody>
            </Results>
            <RecordNav id="question-record" page="1 of 9" />
          </SubForm>
          <Watermark>SOFTPEDIA</Watermark>
        </Detail>
      </FormMain>

      <FormFooter>
        <FormButton $w={40} $color="#008000">Save</FormButton>
        <FormButton $w={91} $color="#000080">Preview Results</FormButton>
        <FormButton $w={44} $color="#ff6a00">Close</FormButton>
      </FormFooter>

      <RecordNav id="survey-record" page="1 of 7" foot />
      <StatusBar>
        <span>Form View</span>
        <Spacer />
        <ViewButton $on aria-label="Form view">
          <Svg w={14} h={13}><path d="M.500 .500h13v12H.500z" stroke="#555" /><path d="M0 0h14v4H0z" fill="#555" /><path d="M2 6.500h4M2 9.500h4" stroke="#555" /><path d="M7.500 6h5v1.500h-5zM7.500 9h5v1.500h-5z" fill="#555" /></Svg>
        </ViewButton>
        <ViewButton aria-label="Layout view">
          <Svg w={14} h={13}><path d="M.500 .500h13v12H.500zM0 3.500h14M3.500 0v13M6 6.500h3M10 6.500h3M6 9.500h3M10 9.500h3" stroke="#555" /></Svg>
        </ViewButton>
      </StatusBar>
    </Window>
  );
}
